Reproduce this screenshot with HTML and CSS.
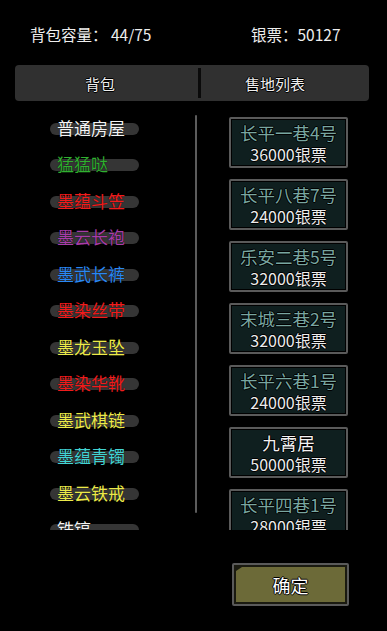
FILE: index.html
```html
<!DOCTYPE html>
<html>
  <head>
    <title>背包</title>
    <link rel="stylesheet" href="styles.css">
  </head>
  <body>
    <div class="header">
      <span class="capacity">背包容量： 44/75</span>
      <span class="money">银票：50127</span>
    </div>

    <div class="tabs">
      <div class="tab tab-left">背包</div>
      <div class="tab-divider"></div>
      <div class="tab tab-right">售地列表</div>
    </div>

    <div class="main">
      <!-- Bag items -->
      <div class="bag-list">
        <div class="item"><div class="pill c-white">普通房屋</div></div>
        <div class="item"><div class="pill c-green">猛猛哒</div></div>
        <div class="item"><div class="pill c-red">墨蕴斗笠</div></div>
        <div class="item"><div class="pill c-purple">墨云长袍</div></div>
        <div class="item"><div class="pill c-blue">墨武长裤</div></div>
        <div class="item"><div class="pill c-red">墨染丝带</div></div>
        <div class="item"><div class="pill c-yellow">墨龙玉坠</div></div>
        <div class="item"><div class="pill c-red">墨染华靴</div></div>
        <div class="item"><div class="pill c-yellow">墨武棋链</div></div>
        <div class="item"><div class="pill c-cyan">墨蕴青镯</div></div>
        <div class="item"><div class="pill c-yellow">墨云铁戒</div></div>
        <div class="item"><div class="pill c-white">铁镐</div></div>
      </div>

      <div class="scrollbar"></div>

      <!-- Land for sale -->
      <div class="sale-list">
        <div class="card"><div class="card-title">长平一巷4号</div><div class="card-price">36000银票</div></div>
        <div class="card"><div class="card-title">长平八巷7号</div><div class="card-price">24000银票</div></div>
        <div class="card"><div class="card-title">乐安二巷5号</div><div class="card-price">32000银票</div></div>
        <div class="card"><div class="card-title">末城三巷2号</div><div class="card-price">32000银票</div></div>
        <div class="card"><div class="card-title">长平六巷1号</div><div class="card-price">24000银票</div></div>
        <div class="card"><div class="card-title special">九霄居</div><div class="card-price">50000银票</div></div>
        <div class="card"><div class="card-title">长平四巷1号</div><div class="card-price">28000银票</div></div>
      </div>
    </div>

    <div class="footer">
      <button class="btn-confirm">确定</button>
    </div>
  </body>
</html>
```

FILE: styles.css
```css
:root {
  --bg: #000;
  --panel: #303030;
  --pill: #353535;
  --border: #5a5a5a;
  --card: #0f1f1f;
  --teal: #78a6a0;
  --outline: 1px 0 0 #000, -1px 0 0 #000, 0 1px 0 #000, 0 -1px 0 #000;
}

body {
  margin: 0;
  background: var(--bg);
  color: #eee;
  font-family: "Noto Sans CJK SC", "Noto Sans", sans-serif;
  width: 387px;
  height: 631px;
  overflow: hidden;
}

.header {
  display: flex;
  height: 65px;
  align-items: center;
  font-size: 15.5px;
  box-sizing: border-box;
  padding-top: 2px;
}

.capacity {
  margin-left: 30px;
  width: 221px;
}

.tabs {
  display: flex;
  align-items: center;
  height: 36px;
  margin: 0 18px 0 15px;
  background: var(--panel);
  border-radius: 4px;
  font-size: 15px;
  text-shadow: var(--outline);
}

.tab {
  text-align: center;
}

.tab-left {
  width: 170px;
}

.tab-right {
  flex: 1;
  padding-right: 20px;
}

.tab-divider {
  width: 3px;
  height: 30px;
  background: #0a0a0a;
  margin-left: 13px;
}

.main {
  display: flex;
  height: 429px;
  overflow: hidden;
}

.bag-list {
  width: 195px;
  padding-top: 8px;
  box-sizing: border-box;
}

.item {
  height: 36.5px;
  display: flex;
  align-items: center;
  padding-left: 50px;
}

.pill {
  width: 82px;
  height: 12px;
  line-height: 10px;
  padding-left: 7px;
  margin-top: 3px;
  background: var(--pill);
  border-radius: 6px;
  font-size: 17px;
  white-space: nowrap;
  text-shadow: 0 0 1px #000;
}

.c-white { color: #f4f4f4; }
.c-green { color: #30b030; }
.c-red { color: #f01c1c; }
.c-purple { color: #a83ca8; }
.c-blue { color: #2a88f4; }
.c-yellow { color: #ecea4a; }
.c-cyan { color: #42d4d4; }

.scrollbar {
  width: 2px;
  height: 398px;
  margin-top: 14px;
  background: #5c5c5c;
  border-radius: 1px;
}

.sale-list {
  padding: 16px 0 0 32px;
  display: flex;
  flex-direction: column;
  gap: 11px;
}

.card {
  flex-shrink: 0;
  width: 115px;
  height: 47px;
  border: 2px solid var(--border);
  border-radius: 2px;
  background: var(--card);
  box-shadow: inset 0 0 0 1px #000;
  display: flex;
  flex-direction: column;
  align-items: center;
  justify-content: center;
  text-shadow: var(--outline);
}

.card-title {
  font-size: 17.5px;
  line-height: 22px;
  color: var(--teal);
}

.card-title.special {
  color: #f2f2f2;
}

.card-price {
  font-size: 16px;
  line-height: 20px;
  color: #ececec;
}

.footer {
  padding: 33px 0 0 232px;
}

.btn-confirm {
  position: relative;
  width: 117px;
  height: 43px;
  border: 2px solid var(--border);
  border-radius: 2px;
  background: #6c6a38;
  box-shadow: inset 0 0 0 2px #1a1a10;
  color: #fff;
  font-family: inherit;
  font-size: 18px;
  text-shadow: var(--outline);
  padding: 0;
  cursor: pointer;
}

.btn-confirm::before {
  content: "";
  position: absolute;
  top: 2px;
  left: 2px;
  border-top: 4px solid #1a1a10;
  border-right: 6px solid transparent;
}
```
